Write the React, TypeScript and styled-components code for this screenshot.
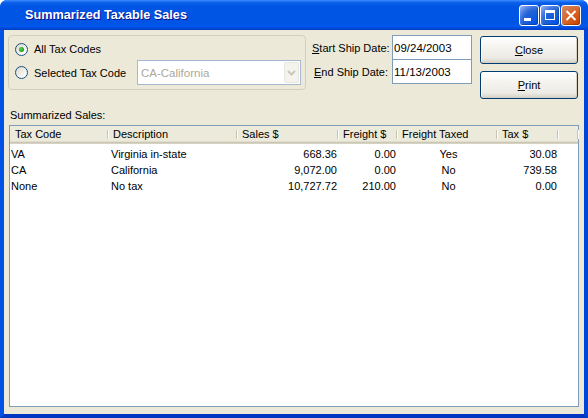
import React from 'react';
import styled, { createGlobalStyle } from 'styled-components';

const GlobalStyle = createGlobalStyle`
  html, body { margin: 0; padding: 0; background: #ffffff; }
  body { font-family: "Liberation Sans", Arial, sans-serif; font-size: 11px; color: #000; }
  * { box-sizing: border-box; }
`;

const Window = styled.div`
  width: 588px;
  height: 418px;
  display: flex;
  flex-direction: column;
  background: #0055ea;
  border-radius: 7px 7px 0 0;
  overflow: hidden;
`;

const TitleBar = styled.div`
  height: 30px;
  flex: none;
  display: flex;
  align-items: center;
  padding: 0 7px 0 25px;
  background: linear-gradient(180deg, #3d8dff 0%, #0a5fe8 9%, #0055e5 22%, #0054e3 75%, #0058ea 88%, #0048d8 94%, #003cc4 100%);
`;

const TitleText = styled.div`
  flex: 1;
  color: #fff;
  font-weight: bold;
  font-size: 12.7px;
  text-shadow: 1px 1px #0f1089;
`;

const TitleButtons = styled.div`
  display: flex;
  gap: 1px;
  margin-top: 1px;
`;

const CaptionButton = styled.div<{ $close?: boolean }>`
  width: 20px;
  height: 21px;
  border: 1px solid #fff;
  border-radius: 3px;
  display: flex;
  align-items: center;
  justify-content: center;
  background: ${p =>
    p.$close
      ? 'radial-gradient(circle at 90% 90%, #cc4600 0%, #dc6527 55%, #cd7546 70%, #e08a63 100%)'
      : 'radial-gradient(circle at 90% 90%, #0054e9 0%, #2263d5 55%, #4479e4 70%, #a3bbec 100%)'};
  box-shadow: inset -1px -1px 1px rgba(0, 0, 0, 0.25);
`;

const Frame = styled.div`
  flex: 1;
  display: flex;
  min-height: 0;
  border-style: solid;
  border-width: 0 4px 4px 4px;
  border-color: #0055e5 #0046d6 #0036c0 #0052e6;
`;

const Client = styled.div`
  flex: 1;
  display: flex;
  flex-direction: column;
  background: #ece9d8;
  padding: 5px 5px 7px 4px;
`;

const TopRow = styled.div`
  display: flex;
  align-items: flex-start;
`;

const GroupBox = styled.div`
  width: 298px;
  height: 55px;
  border: 1px solid #d0d0bf;
  border-radius: 4px;
  padding: 2px 4px 0 6px;
  display: flex;
  flex-direction: column;
`;

const RadioRow = styled.div<{ $h: number }>`
  height: ${p => p.$h}px;
  display: flex;
  align-items: center;
`;

const RadioCircle = styled.span<{ $checked?: boolean }>`
  width: 13px;
  height: 13px;
  border-radius: 50%;
  border: 1px solid #1c5180;
  background: linear-gradient(135deg, #dcd7cb 0%, #ffffff 90%);
  display: flex;
  align-items: center;
  justify-content: center;
  flex: none;
  &::after {
    content: '';
    display: ${p => (p.$checked ? 'block' : 'none')};
    width: 5px;
    height: 5px;
    border-radius: 50%;
    background: radial-gradient(circle at 40% 40%, #55d651 0%, #21a121 60%, #1a8a1a 100%);
  }
`;

const RadioLabel = styled.span`
  margin-left: 6px;
  white-space: nowrap;
`;

const Combo = styled.div`
  margin-left: auto;
  width: 164px;
  height: 25px;
  border: 1px solid #a5b8d0;
  background: #fff;
  display: flex;
  align-items: center;
  padding: 1px 1px 1px 3px;
`;

const ComboText = styled.span`
  flex: 1;
  color: #aca899;
  font-size: 11.5px;
`;

const ComboArrow = styled.div`
  width: 15px;
  height: 21px;
  background: #f4f3ee;
  border: 1px solid #e8e7df;
  border-radius: 2px;
  display: flex;
  align-items: center;
  justify-content: center;
`;

const DateGrid = styled.div`
  margin-left: 6px;
  display: grid;
  grid-template-columns: 76px 80px;
  column-gap: 4px;
`;

const DateLabel = styled.label`
  text-align: right;
  align-self: center;
  white-space: nowrap;
`;

const DateInput = styled.div<{ $first?: boolean }>`
  height: 25px;
  margin-top: ${p => (p.$first ? 0 : -1)}px;
  border: 1px solid #7f9db9;
  background: #fff;
  display: flex;
  align-items: center;
  padding-left: 1px;
  font-size: 11.5px;
`;

const ButtonColumn = styled.div`
  margin: 1px 1px 0 auto;
  display: flex;
  flex-direction: column;
  gap: 7px;
`;

const Button = styled.div`
  width: 98px;
  height: 28px;
  border: 1px solid #003c74;
  border-radius: 3px;
  background: linear-gradient(180deg, #ffffff 0%, #f4f3ee 40%, #ecebe6 80%, #d6d0c5 100%);
  box-shadow: inset -1px -1px #d6d0c5, inset 1px 1px #fff;
  display: flex;
  align-items: center;
  justify-content: center;
`;

const U = styled.span`
  text-decoration: underline;
`;

const SectionLabel = styled.div`
  margin: 9px 0 0 2px;
  line-height: 14px;
`;

const ListView = styled.div`
  margin: 3px 0 0 1px;
  flex: 1;
  border: 1px solid #7f9db9;
  background: #fff;
  display: flex;
  flex-direction: column;
`;

const cols = '98px 129px 101px 59px 100px 61px 1fr';

const HeaderRow = styled.div`
  display: grid;
  grid-template-columns: ${cols};
  height: 18px;
  background: #ebeadb;
  box-shadow: inset 0 -1px #d6d2c2, inset 0 -2px #cbc7b8, inset 0 -3px #e2decd;
`;

const HeaderCell = styled.div`
  position: relative;
  padding: 0 0 3px 5px;
  display: flex;
  align-items: center;
  white-space: nowrap;
  &::after {
    content: '';
    position: absolute;
    right: 0;
    top: 4px;
    bottom: 5px;
    width: 1px;
    background: #c7c5b2;
    box-shadow: 1px 0 #fff;
  }
`;

const Body = styled.div`
  padding-top: 2px;
`;

const DataRow = styled.div`
  display: grid;
  grid-template-columns: ${cols};
  height: 16px;
  line-height: 16px;
`;

const Cell = styled.div<{ $align?: 'left' | 'right' | 'center'; $first?: boolean }>`
  text-align: ${p => p.$align || 'left'};
  padding: ${p => (p.$align === 'right' ? '0 1px 0 0' : p.$first ? '0 0 0 1px' : '0 0 0 3px')};
  white-space: nowrap;
  overflow: hidden;
`;

const rows = [
  ['VA', 'Virginia in-state', '668.36', '0.00', 'Yes', '30.08'],
  ['CA', 'California', '9,072.00', '0.00', 'No', '739.58'],
  ['None', 'No tax', '10,727.72', '210.00', 'No', '0.00'],
];

const headers = ['Tax Code', 'Description', 'Sales $', 'Freight $', 'Freight Taxed', 'Tax $', ''];

export default function App() {
  return (
    <>
      <GlobalStyle />
      <Window>
        <TitleBar>
          <TitleText>Summarized Taxable Sales</TitleText>
          <TitleButtons>
            <CaptionButton>
              <svg width="18" height="19" viewBox="0 0 18 19">
                <rect x="4" y="12" width="7" height="3" fill="#fff" />
              </svg>
            </CaptionButton>
            <CaptionButton>
              <svg width="18" height="19" viewBox="0 0 18 19">
                <rect x="4.5" y="4.5" width="9" height="9" fill="none" stroke="#fff" strokeWidth="1" />
                <rect x="4" y="4" width="10" height="3" fill="#fff" />
              </svg>
            </CaptionButton>
            <CaptionButton $close>
              <svg width="18" height="19" viewBox="0 0 18 19">
                <path d="M4.5 5 L13.5 14 M13.5 5 L4.5 14" stroke="#fff" strokeWidth="2" />
              </svg>
            </CaptionButton>
          </TitleButtons>
        </TitleBar>
        <Frame>
          <Client>
            <TopRow>
              <GroupBox>
                <RadioRow $h={22}>
                  <RadioCircle $checked />
                  <RadioLabel>All Tax Codes</RadioLabel>
                </RadioRow>
                <RadioRow $h={25}>
                  <RadioCircle />
                  <RadioLabel>Selected Tax Code</RadioLabel>
                  <Combo>
                    <ComboText>CA-California</ComboText>
                    <ComboArrow>
                      <svg width="9" height="6" viewBox="0 0 9 6">
                        <path d="M1 1 L4.5 4.5 L8 1" fill="none" stroke="#c9c7ba" strokeWidth="2" />
                      </svg>
                    </ComboArrow>
                  </Combo>
                </RadioRow>
              </GroupBox>
              <DateGrid>
                <DateLabel>
                  <U>S</U>tart Ship Date:
                </DateLabel>
                <DateInput $first>09/24/2003</DateInput>
                <DateLabel>
                  <U>E</U>nd Ship Date:
                </DateLabel>
                <DateInput>11/13/2003</DateInput>
              </DateGrid>
              <ButtonColumn>
                <Button>
                  <span>
                    <U>C</U>lose
                  </span>
                </Button>
                <Button>
                  <span>
                    <U>P</U>rint
                  </span>
                </Button>
              </ButtonColumn>
            </TopRow>
            <SectionLabel>Summarized Sales:</SectionLabel>
            <ListView>
              <HeaderRow>
                {headers.map((h, i) => (
                  <HeaderCell key={i}>{h}</HeaderCell>
                ))}
              </HeaderRow>
              <Body>
                {rows.map((r, i) => (
                  <DataRow key={i}>
                    <Cell $first>{r[0]}</Cell>
                    <Cell>{r[1]}</Cell>
                    <Cell $align="right">{r[2]}</Cell>
                    <Cell $align="right">{r[3]}</Cell>
                    <Cell $align="center">{r[4]}</Cell>
                    <Cell $align="right">{r[5]}</Cell>
                    <Cell />
                  </DataRow>
                ))}
              </Body>
            </ListView>
          </Client>
        </Frame>
      </Window>
    </>
  );
}
